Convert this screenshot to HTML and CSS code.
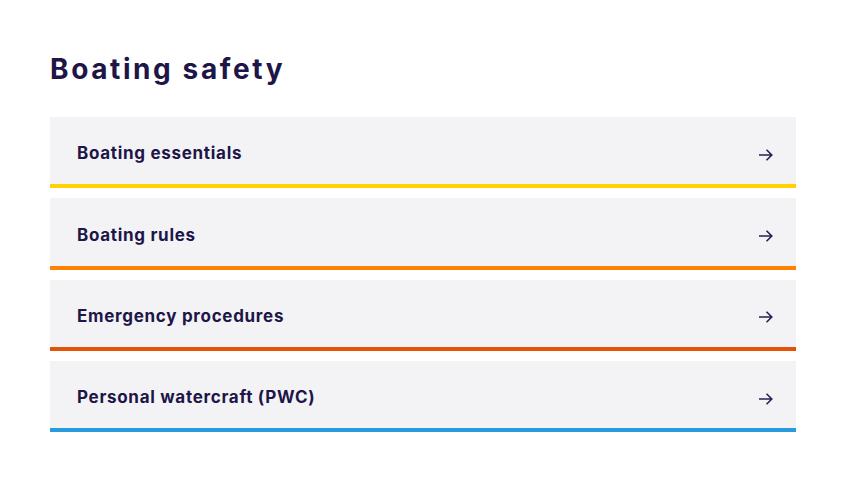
FILE: index.html
```html
<!DOCTYPE html>
<html lang="en">
<head>
<meta charset="utf-8">
<title>Boating safety</title>
<link rel="stylesheet" href="styles.css">
</head>
<body>
<main class="page">
  <h1 class="title">Boating safety</h1>
  <ul class="links">
    <li><a class="card card-yellow" href="#"><span>Boating essentials</span><svg class="arrow" viewBox="0 0 14 12" width="14" height="12"><path d="M0 6h13M7.5 0.7 12.8 6l-5.3 5.3" fill="none" stroke="currentColor" stroke-width="1.6"/></svg></a></li>
    <li><a class="card card-orange" href="#"><span>Boating rules</span><svg class="arrow" viewBox="0 0 14 12" width="14" height="12"><path d="M0 6h13M7.5 0.7 12.8 6l-5.3 5.3" fill="none" stroke="currentColor" stroke-width="1.6"/></svg></a></li>
    <li><a class="card card-red" href="#"><span>Emergency procedures</span><svg class="arrow" viewBox="0 0 14 12" width="14" height="12"><path d="M0 6h13M7.5 0.7 12.8 6l-5.3 5.3" fill="none" stroke="currentColor" stroke-width="1.6"/></svg></a></li>
    <li><a class="card card-blue" href="#"><span>Personal watercraft (PWC)</span><svg class="arrow" viewBox="0 0 14 12" width="14" height="12"><path d="M0 6h13M7.5 0.7 12.8 6l-5.3 5.3" fill="none" stroke="currentColor" stroke-width="1.6"/></svg></a></li>
  </ul>
</main>
</body>
</html>
```
FILE: styles.css
```css
html, body {
  margin: 0;
  padding: 0;
  background: #ffffff;
}
body {
  font-family: "Inter", "Noto Sans", sans-serif;
  color: #201547;
}
.page {
  padding: 51px 50px 0 50px;
}
.title {
  margin: 0 0 30px 0;
  font-size: 28px;
  line-height: 36px;
  font-weight: 700;
  letter-spacing: 2.6px;
}
.links {
  list-style: none;
  margin: 0;
  padding: 0;
  display: flex;
  flex-direction: column;
  gap: 10px;
}
.card {
  display: flex;
  align-items: center;
  justify-content: space-between;
  height: 67.35px;
  padding: 0 23px 0 27px;
  background: #f3f3f6;
  border-bottom: 4px solid #ffd200;
  color: #201547;
  text-decoration: none;
  font-size: 17px;
  font-weight: 700;
  letter-spacing: 0.7px;
}
.card span {
  padding-top: 5px;
}
.arrow {
  color: #2a1f55;
  margin-top: 8px;
}
.card-yellow { border-bottom-color: #ffd200; }
.card-orange { border-bottom-color: #ff8200; }
.card-red { border-bottom-color: #e35205; }
.card-blue { border-bottom-color: #279bdc; }
```
